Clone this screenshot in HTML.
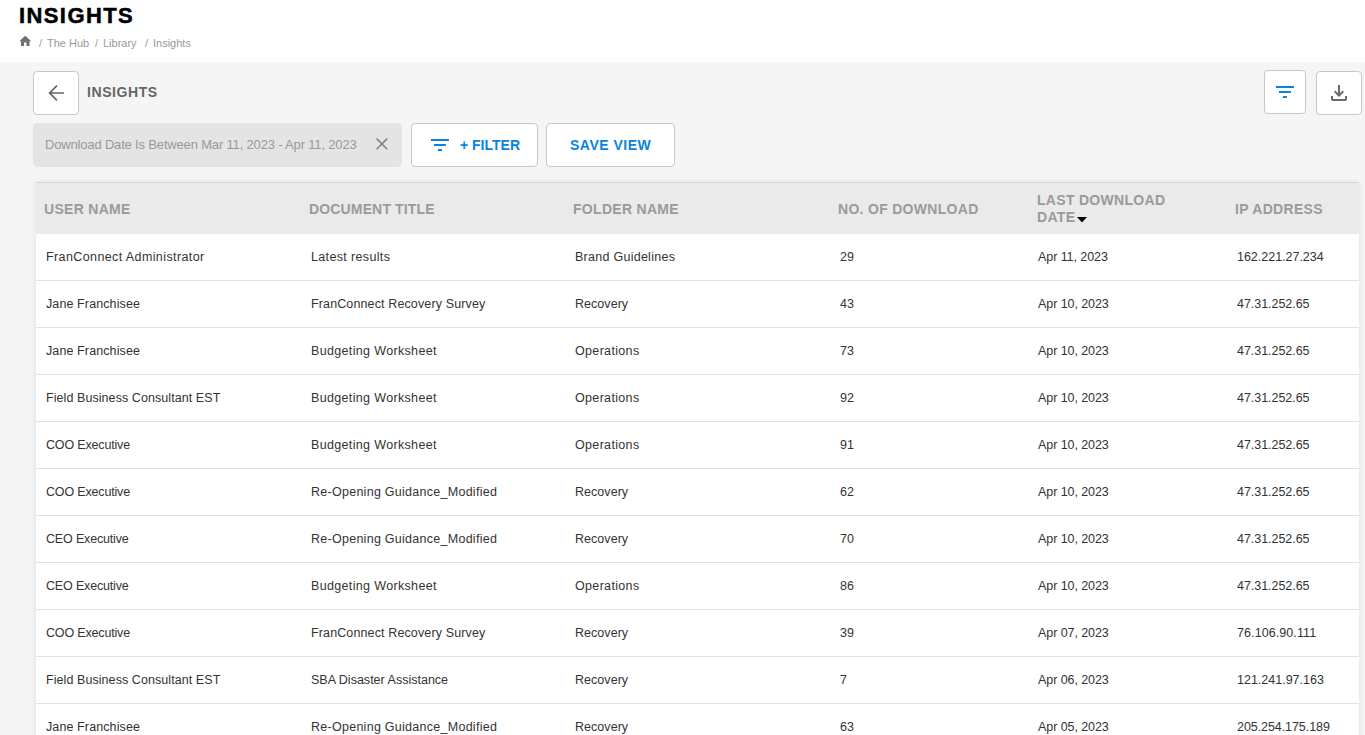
<!DOCTYPE html>
<html><head><meta charset="utf-8">
<style>
*{box-sizing:border-box;margin:0;padding:0}
html,body{width:1365px;height:735px;overflow:hidden;background:#fff;font-family:"Liberation Sans",sans-serif}
.abs{position:absolute}
#top{position:absolute;left:0;top:0;width:1365px;height:62px;background:#fff}
#title{position:absolute;left:19px;top:4px;font-size:22px;font-weight:bold;letter-spacing:1.4px;color:#000;line-height:24px;-webkit-text-stroke:0.5px #000}
#crumbs{position:absolute;left:19px;top:36px;height:14px;font-size:11px;color:#999;line-height:14px;white-space:nowrap}
#main{position:absolute;left:0;top:62px;width:1365px;height:673px;background:#f5f5f5}
.btn{position:absolute;background:#fff;border:1px solid #c8c8c8;border-radius:4px}
#sub{position:absolute;left:87px;top:84px;font-size:14px;font-weight:bold;color:#666;letter-spacing:0.57px;line-height:16px}
#chip{position:absolute;left:33px;top:123px;width:369px;height:44px;background:#e4e4e4;border-radius:4.5px}
#chip span{position:absolute;left:12px;top:14px;font-size:13px;color:#999;letter-spacing:-0.17px;line-height:16px;white-space:nowrap}
.tbtn{font-size:14px;font-weight:bold;color:#0784e3;line-height:16px;white-space:nowrap}
#table{position:absolute;left:36px;top:182px;width:1323px;height:560px;background:#fff;border-top:1px solid #d6d6d6;box-shadow:0 0 6px rgba(0,0,0,0.09)}
#thead{position:absolute;left:0;top:0;width:100%;height:51px;background:#eaeaea}
.th{position:absolute;font-size:14px;font-weight:bold;color:#9a9a9a;line-height:17px;white-space:nowrap;letter-spacing:0.3px}
.row{position:absolute;left:0;width:100%;height:47px;border-bottom:1px solid #e2e2e2}
.td{position:absolute;top:15px;font-size:12.5px;color:#333;line-height:16px;white-space:nowrap}
</style></head>
<body>
<div id="top">
  <div id="title">INSIGHTS</div>
  <svg class="abs" style="left:18.3px;top:34.1px" width="14.5" height="14.5" viewBox="0 0 24 24"><path d="M10 20v-6h4v6h5v-8h3L12 3 2 12h3v8z" fill="#707070"/></svg>
  <div id="crumbs">
    <span class="abs" style="left:20px;top:0">/</span>
    <span class="abs" style="left:28px;top:0">The Hub</span>
    <span class="abs" style="left:76px;top:0">/</span>
    <span class="abs" style="left:84px;top:0">Library</span>
    <span class="abs" style="left:126px;top:0">/</span>
    <span class="abs" style="left:134px;top:0">Insights</span>
  </div>
</div>
<div id="main"></div>

<!-- back button -->
<div class="btn" style="left:33px;top:71px;width:46px;height:44px"></div>
<svg class="abs" style="left:0;top:0" width="1365" height="180" viewBox="0 0 1365 180">
  <!-- back arrow -->
  <path d="M64 93 H49.6 M57 85.6 L49.6 93 L57 100.4" fill="none" stroke="#666" stroke-width="1.7" stroke-linecap="butt" stroke-linejoin="miter"/>
</svg>
<div id="sub">INSIGHTS</div>

<!-- right buttons -->
<div class="btn" style="left:1264px;top:70px;width:42px;height:44px"></div>
<div class="btn" style="left:1316px;top:71px;width:46px;height:44px"></div>

<div id="chip"><span>Download Date Is Between Mar 11, 2023 - Apr 11, 2023</span></div>
<div class="btn" style="left:411px;top:123px;width:127px;height:44px">
  <span class="abs tbtn" style="left:48px;top:13px">+ FILTER</span>
</div>
<div class="btn" style="left:546px;top:123px;width:129px;height:44px">
  <span class="abs tbtn" style="left:23px;top:13px;letter-spacing:0.5px">SAVE VIEW</span>
</div>
<svg class="abs" style="left:0;top:0" width="1365" height="180" viewBox="0 0 1365 180">
  <!-- filter icon top right -->
  <g transform="translate(1272.9 79.9)" fill="#0784e3"><path d="M10 18h4v-2h-4v2zM3 6v2h18V6H3zm3 7h12v-2H6v2z"/></g>
  <!-- download icon -->
  <g transform="translate(1327 81)" fill="#6a6a6a"><path transform="translate(0 24) scale(0.025)" d="M480-320 280-520l56-58 104 104v-326h80v326l104-104 56 58-200 200ZM240-160q-33 0-56.5-23.5T160-240v-120h80v120h480v-120h80v120q0 33-23.5 56.5T720-160H240Z"/></g>
  <!-- filter icon in +FILTER -->
  <g transform="translate(427.9 132.9)" fill="#0784e3"><path d="M10 18h4v-2h-4v2zM3 6v2h18V6H3zm3 7h12v-2H6v2z"/></g>
  <!-- chip close -->
  <path d="M376.6 138.6 L387.2 149.2 M387.2 138.6 L376.6 149.2" stroke="#808080" stroke-width="1.5"/>
</svg>

<div id="table">
  <div id="thead">
    <div class="th" style="left:8px;top:18px">USER NAME</div>
    <div class="th" style="left:273px;top:18px;letter-spacing:0.15px">DOCUMENT TITLE</div>
    <div class="th" style="left:537px;top:18px">FOLDER NAME</div>
    <div class="th" style="left:802px;top:18px">NO. OF DOWNLOAD</div>
    <div class="th" style="left:1001px;top:9px">LAST DOWNLOAD<br>DATE</div>
    <svg class="abs" style="left:1041px;top:33.6px" width="10" height="6" viewBox="0 0 10 6"><path d="M0 0 H10 L5 5.5 Z" fill="#000"/></svg>
    <div class="th" style="left:1199px;top:18px">IP ADDRESS</div>
  </div>
  <div id="rows">
  <div class="row" style="top:51px"><div class="td" style="left:10px;letter-spacing:0.396px">FranConnect Administrator</div><div class="td" style="left:275px;letter-spacing:0.354px">Latest results</div><div class="td" style="left:539px;letter-spacing:0.267px">Brand Guidelines</div><div class="td" style="left:804px;letter-spacing:0px">29</div><div class="td" style="left:1002px;letter-spacing:-0.073px">Apr 11, 2023</div><div class="td" style="left:1201px;letter-spacing:-0.015px">162.221.27.234</div></div>
  <div class="row" style="top:98px"><div class="td" style="left:10px;letter-spacing:0.107px">Jane Franchisee</div><div class="td" style="left:275px;letter-spacing:0.127px">FranConnect Recovery Survey</div><div class="td" style="left:539px;letter-spacing:0.043px">Recovery</div><div class="td" style="left:804px;letter-spacing:0px">43</div><div class="td" style="left:1002px;letter-spacing:-0.07px">Apr 10, 2023</div><div class="td" style="left:1201px;letter-spacing:-0.045px">47.31.252.65</div></div>
  <div class="row" style="top:145px"><div class="td" style="left:10px;letter-spacing:0.107px">Jane Franchisee</div><div class="td" style="left:275px;letter-spacing:0.344px">Budgeting Worksheet</div><div class="td" style="left:539px;letter-spacing:0.333px">Operations</div><div class="td" style="left:804px;letter-spacing:0px">73</div><div class="td" style="left:1002px;letter-spacing:-0.07px">Apr 10, 2023</div><div class="td" style="left:1201px;letter-spacing:-0.045px">47.31.252.65</div></div>
  <div class="row" style="top:192px"><div class="td" style="left:10px;letter-spacing:0.071px">Field Business Consultant EST</div><div class="td" style="left:275px;letter-spacing:0.344px">Budgeting Worksheet</div><div class="td" style="left:539px;letter-spacing:0.333px">Operations</div><div class="td" style="left:804px;letter-spacing:0px">92</div><div class="td" style="left:1002px;letter-spacing:-0.07px">Apr 10, 2023</div><div class="td" style="left:1201px;letter-spacing:-0.045px">47.31.252.65</div></div>
  <div class="row" style="top:239px"><div class="td" style="left:10px;letter-spacing:-0.167px">COO Executive</div><div class="td" style="left:275px;letter-spacing:0.344px">Budgeting Worksheet</div><div class="td" style="left:539px;letter-spacing:0.333px">Operations</div><div class="td" style="left:804px;letter-spacing:0px">91</div><div class="td" style="left:1002px;letter-spacing:-0.07px">Apr 10, 2023</div><div class="td" style="left:1201px;letter-spacing:-0.045px">47.31.252.65</div></div>
  <div class="row" style="top:286px"><div class="td" style="left:10px;letter-spacing:-0.167px">COO Executive</div><div class="td" style="left:275px;letter-spacing:0.27px">Re-Opening Guidance_Modified</div><div class="td" style="left:539px;letter-spacing:0.043px">Recovery</div><div class="td" style="left:804px;letter-spacing:0px">62</div><div class="td" style="left:1002px;letter-spacing:-0.07px">Apr 10, 2023</div><div class="td" style="left:1201px;letter-spacing:-0.045px">47.31.252.65</div></div>
  <div class="row" style="top:333px"><div class="td" style="left:10px;letter-spacing:-0.167px">CEO Executive</div><div class="td" style="left:275px;letter-spacing:0.27px">Re-Opening Guidance_Modified</div><div class="td" style="left:539px;letter-spacing:0.043px">Recovery</div><div class="td" style="left:804px;letter-spacing:0px">70</div><div class="td" style="left:1002px;letter-spacing:-0.07px">Apr 10, 2023</div><div class="td" style="left:1201px;letter-spacing:-0.045px">47.31.252.65</div></div>
  <div class="row" style="top:380px"><div class="td" style="left:10px;letter-spacing:-0.167px">CEO Executive</div><div class="td" style="left:275px;letter-spacing:0.344px">Budgeting Worksheet</div><div class="td" style="left:539px;letter-spacing:0.333px">Operations</div><div class="td" style="left:804px;letter-spacing:0px">86</div><div class="td" style="left:1002px;letter-spacing:-0.07px">Apr 10, 2023</div><div class="td" style="left:1201px;letter-spacing:-0.045px">47.31.252.65</div></div>
  <div class="row" style="top:427px"><div class="td" style="left:10px;letter-spacing:-0.167px">COO Executive</div><div class="td" style="left:275px;letter-spacing:0.127px">FranConnect Recovery Survey</div><div class="td" style="left:539px;letter-spacing:0.043px">Recovery</div><div class="td" style="left:804px;letter-spacing:0px">39</div><div class="td" style="left:1002px;letter-spacing:-0.07px">Apr 07, 2023</div><div class="td" style="left:1201px;letter-spacing:0.083px">76.106.90.111</div></div>
  <div class="row" style="top:474px"><div class="td" style="left:10px;letter-spacing:0.071px">Field Business Consultant EST</div><div class="td" style="left:275px;letter-spacing:0.009px">SBA Disaster Assistance</div><div class="td" style="left:539px;letter-spacing:0.043px">Recovery</div><div class="td" style="left:804px;letter-spacing:0px">7</div><div class="td" style="left:1002px;letter-spacing:-0.07px">Apr 06, 2023</div><div class="td" style="left:1201px;letter-spacing:0.0px">121.241.97.163</div></div>
  <div class="row" style="top:521px"><div class="td" style="left:10px;letter-spacing:0.107px">Jane Franchisee</div><div class="td" style="left:275px;letter-spacing:0.27px">Re-Opening Guidance_Modified</div><div class="td" style="left:539px;letter-spacing:0.043px">Recovery</div><div class="td" style="left:804px;letter-spacing:0px">63</div><div class="td" style="left:1002px;letter-spacing:-0.07px">Apr 05, 2023</div><div class="td" style="left:1201px;letter-spacing:-0.071px">205.254.175.189</div></div>
  </div>
</div>
</body></html>
